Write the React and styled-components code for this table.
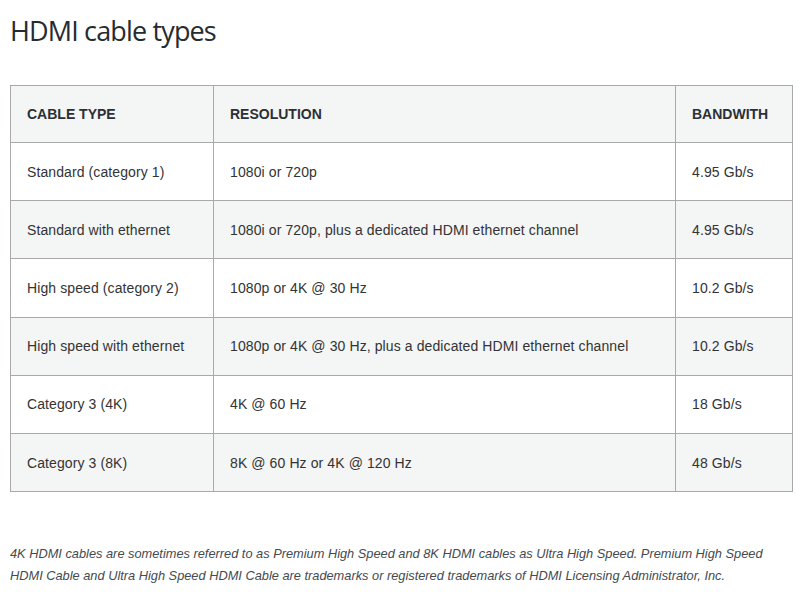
import React from "react";
import styled, { createGlobalStyle } from "styled-components";

const rows = [
  ["Standard (category 1)", "1080i or 720p", "4.95 Gb/s"],
  ["Standard with ethernet", "1080i or 720p, plus a dedicated HDMI ethernet channel", "4.95 Gb/s"],
  ["High speed (category 2)", "1080p or 4K @ 30 Hz", "10.2 Gb/s"],
  ["High speed with ethernet", "1080p or 4K @ 30 Hz, plus a dedicated HDMI ethernet channel", "10.2 Gb/s"],
  ["Category 3 (4K)", "4K @ 60 Hz", "18 Gb/s"],
  ["Category 3 (8K)", "8K @ 60 Hz or 4K @ 120 Hz", "48 Gb/s"],
];

const App = () => {
  return (
    <>
      <GlobalStyle />
      <Page>
        <Title>HDMI cable types</Title>
        <Table>
          <colgroup>
            <col style={{ width: 203 }} />
            <col style={{ width: 462 }} />
            <col />
          </colgroup>
          <thead>
            <tr>
              <HeadCell>Cable type</HeadCell>
              <HeadCell>Resolution</HeadCell>
              <HeadCell>Bandwith</HeadCell>
            </tr>
          </thead>
          <tbody>
            {rows.map((row, i) => (
              <Row key={i} $striped={i % 2 === 1}>
                {row.map((cell, j) => (
                  <Cell key={j}>{cell}</Cell>
                ))}
              </Row>
            ))}
          </tbody>
        </Table>
        <Note>
          4K HDMI cables are sometimes referred to as Premium High Speed and 8K HDMI cables as
          Ultra High Speed. Premium High Speed HDMI Cable and Ultra High Speed HDMI Cable are
          trademarks or registered trademarks of HDMI Licensing Administrator, Inc.
        </Note>
      </Page>
    </>
  );
};

const GlobalStyle = createGlobalStyle`
  body {
    margin: 0;
    background: #ffffff;
    font-family: "Liberation Sans", Arial, sans-serif;
    color: #333333;
  }
`;

const Page = styled.div`
  padding: 0 7px 0 10px;
`;

const Title = styled.h1`
  margin: 0;
  padding-top: 12px;
  font-family: "Open Sans", "Noto Sans", sans-serif;
  font-size: 27px;
  font-weight: 400;
  line-height: 38px;
  letter-spacing: -0.85px;
  color: #262b30;
`;

const Table = styled.table`
  margin-top: 35px;
  width: 783px;
  border-collapse: collapse;
  table-layout: fixed;
  border: 1px solid #a9a9a9;
`;

const HeadCell = styled.th`
  height: 56px;
  padding: 0 16px;
  background: #f4f5f5;
  border: 1px solid #a9a9a9;
  text-align: left;
  text-transform: uppercase;
  font-size: 14px;
  font-weight: 700;
  color: #2b3035;
`;

const Row = styled.tr`
  background: ${(p) => (p.$striped ? "#f4f5f5" : "#ffffff")};
`;

const Cell = styled.td`
  height: 57.2px;
  padding: 0 16px;
  border: 1px solid #a9a9a9;
  font-size: 14px;
  letter-spacing: 0.1px;
  color: #333333;
  white-space: nowrap;
`;

const Note = styled.p`
  margin: 51px 0 0;
  font-size: 12.8px;
  font-style: italic;
  line-height: 22px;
  color: #444a50;
`;

export default App;
